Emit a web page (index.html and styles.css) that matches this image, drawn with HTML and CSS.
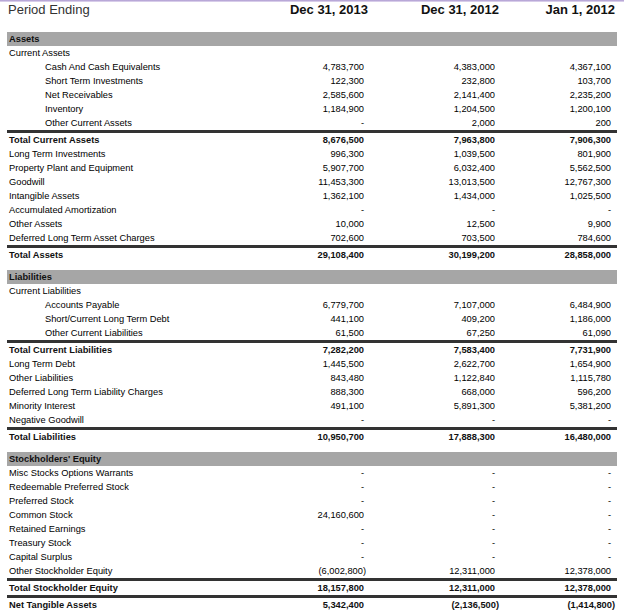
FILE: index.html
```html
<!DOCTYPE html>
<html>
<head>
<meta charset="utf-8">
<link rel="stylesheet" href="styles.css">
</head>
<body>
<div class="topline"></div>
<div class="sheet">
  <div class="row head">
    <div class="lbl">Period Ending</div>
    <div class="num">Dec 31, 2013</div>
    <div class="num">Dec 31, 2012</div>
    <div class="num">Jan 1, 2012</div>
  </div>

  <div class="row section"><div class="lbl">Assets</div><div></div><div></div><div></div></div>
  <div class="row"><div class="lbl">Current Assets</div><div></div><div></div><div></div></div>
  <div class="row"><div class="lbl ind">Cash And Cash Equivalents</div><div class="num p">4,783,700</div><div class="num p">4,383,000</div><div class="num p">4,367,100</div></div>
  <div class="row"><div class="lbl ind">Short Term Investments</div><div class="num p">122,300</div><div class="num p">232,800</div><div class="num p">103,700</div></div>
  <div class="row"><div class="lbl ind">Net Receivables</div><div class="num p">2,585,600</div><div class="num p">2,141,400</div><div class="num p">2,235,200</div></div>
  <div class="row"><div class="lbl ind">Inventory</div><div class="num p">1,184,900</div><div class="num p">1,204,500</div><div class="num p">1,200,100</div></div>
  <div class="row"><div class="lbl ind">Other Current Assets</div><div class="num p">-</div><div class="num p">2,000</div><div class="num p">200</div></div>
  <div class="row total"><div class="lbl">Total Current Assets</div><div class="num p">8,676,500</div><div class="num p">7,963,800</div><div class="num p">7,906,300</div></div>
  <div class="row"><div class="lbl">Long Term Investments</div><div class="num p">996,300</div><div class="num p">1,039,500</div><div class="num p">801,900</div></div>
  <div class="row"><div class="lbl">Property Plant and Equipment</div><div class="num p">5,907,700</div><div class="num p">6,032,400</div><div class="num p">5,562,500</div></div>
  <div class="row"><div class="lbl">Goodwill</div><div class="num p">11,453,300</div><div class="num p">13,013,500</div><div class="num p">12,767,300</div></div>
  <div class="row"><div class="lbl">Intangible Assets</div><div class="num p">1,362,100</div><div class="num p">1,434,000</div><div class="num p">1,025,500</div></div>
  <div class="row"><div class="lbl">Accumulated Amortization</div><div class="num p">-</div><div class="num p">-</div><div class="num p">-</div></div>
  <div class="row"><div class="lbl">Other Assets</div><div class="num p">10,000</div><div class="num p">12,500</div><div class="num p">9,900</div></div>
  <div class="row"><div class="lbl">Deferred Long Term Asset Charges</div><div class="num p">702,600</div><div class="num p">703,500</div><div class="num p">784,600</div></div>
  <div class="row total"><div class="lbl">Total Assets</div><div class="num p">29,108,400</div><div class="num p">30,199,200</div><div class="num p">28,858,000</div></div>

  <div class="row section gap"><div class="lbl">Liabilities</div><div></div><div></div><div></div></div>
  <div class="row"><div class="lbl">Current Liabilities</div><div></div><div></div><div></div></div>
  <div class="row"><div class="lbl ind">Accounts Payable</div><div class="num p">6,779,700</div><div class="num p">7,107,000</div><div class="num p">6,484,900</div></div>
  <div class="row"><div class="lbl ind">Short/Current Long Term Debt</div><div class="num p">441,100</div><div class="num p">409,200</div><div class="num p">1,186,000</div></div>
  <div class="row"><div class="lbl ind">Other Current Liabilities</div><div class="num p">61,500</div><div class="num p">67,250</div><div class="num p">61,090</div></div>
  <div class="row total"><div class="lbl">Total Current Liabilities</div><div class="num p">7,282,200</div><div class="num p">7,583,400</div><div class="num p">7,731,900</div></div>
  <div class="row"><div class="lbl">Long Term Debt</div><div class="num p">1,445,500</div><div class="num p">2,622,700</div><div class="num p">1,654,900</div></div>
  <div class="row"><div class="lbl">Other Liabilities</div><div class="num p">843,480</div><div class="num p">1,122,840</div><div class="num p">1,115,780</div></div>
  <div class="row"><div class="lbl">Deferred Long Term Liability Charges</div><div class="num p">888,300</div><div class="num p">668,000</div><div class="num p">596,200</div></div>
  <div class="row"><div class="lbl">Minority Interest</div><div class="num p">491,100</div><div class="num p">5,891,300</div><div class="num p">5,381,200</div></div>
  <div class="row"><div class="lbl">Negative Goodwill</div><div class="num p">-</div><div class="num p">-</div><div class="num p">-</div></div>
  <div class="row total"><div class="lbl">Total Liabilities</div><div class="num p">10,950,700</div><div class="num p">17,888,300</div><div class="num p">16,480,000</div></div>

  <div class="row section gap"><div class="lbl">Stockholders' Equity</div><div></div><div></div><div></div></div>
  <div class="row"><div class="lbl">Misc Stocks Options Warrants</div><div class="num p">-</div><div class="num p">-</div><div class="num p">-</div></div>
  <div class="row"><div class="lbl">Redeemable Preferred Stock</div><div class="num p">-</div><div class="num p">-</div><div class="num p">-</div></div>
  <div class="row"><div class="lbl">Preferred Stock</div><div class="num p">-</div><div class="num p">-</div><div class="num p">-</div></div>
  <div class="row"><div class="lbl">Common Stock</div><div class="num p">24,160,600</div><div class="num p">-</div><div class="num p">-</div></div>
  <div class="row"><div class="lbl">Retained Earnings</div><div class="num p">-</div><div class="num p">-</div><div class="num p">-</div></div>
  <div class="row"><div class="lbl">Treasury Stock</div><div class="num p">-</div><div class="num p">-</div><div class="num p">-</div></div>
  <div class="row"><div class="lbl">Capital Surplus</div><div class="num p">-</div><div class="num p">-</div><div class="num p">-</div></div>
  <div class="row"><div class="lbl">Other Stockholder Equity</div><div class="num pc">(6,002,800)</div><div class="num p">12,311,000</div><div class="num p">12,378,000</div></div>
  <div class="row total"><div class="lbl">Total Stockholder Equity</div><div class="num p">18,157,800</div><div class="num p">12,311,000</div><div class="num p">12,378,000</div></div>
  <div class="row total"><div class="lbl">Net Tangible Assets</div><div class="num p">5,342,400</div><div class="num">(2,136,500)</div><div class="num">(1,414,800)</div></div>
</div>
</body>
</html>
```

FILE: styles.css
```css
* { box-sizing: border-box; }

html, body {
  margin: 0;
  padding: 0;
  background: #ffffff;
}

body {
  font-family: "Liberation Sans", Arial, Helvetica, sans-serif;
  font-size: 9.3px;
  color: #000000;
}

.topline {
  height: 2px;
  background: linear-gradient(to bottom, #a996cf, #e6def2);
}

.sheet {
  width: 610px;
  margin-left: 7px;
}

.row {
  display: grid;
  grid-template-columns: 232px 131px 131px 116px;
  height: 14px;
  line-height: 14px;
  white-space: nowrap;
}

.row > div {
  padding: 0 2px;
}

.lbl.ind {
  padding-left: 38px;
}

.num {
  text-align: right;
}

.num.p {
  padding-right: 6px;
}

.num.pc {
  padding-right: 4px;
}

.head {
  height: 30px;
  line-height: 16px;
  font-size: 13px;
}

.head .lbl {
  color: #333333;
  padding-left: 1px;
}

.head .num {
  font-weight: bold;
  color: #111111;
}

.section {
  background: #a6a6a6;
  font-weight: bold;
  color: #111111;
}

.section.gap {
  margin-top: 8px;
}

.total {
  height: 17px;
  border-top: 3px solid #333333;
  font-weight: bold;
  color: #111111;
}
```
